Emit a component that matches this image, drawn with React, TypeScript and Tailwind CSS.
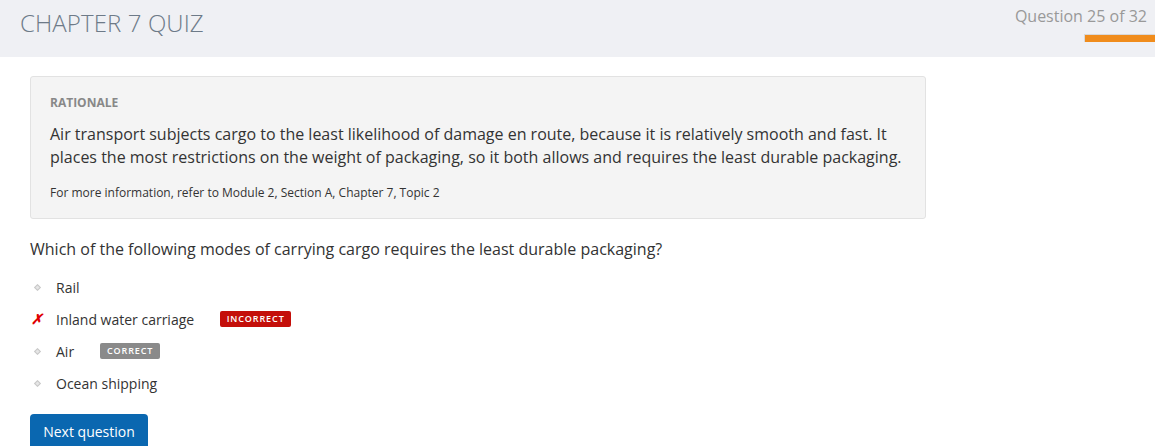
import React from "react";

const font = { fontFamily: '"Open Sans", "Noto Sans", sans-serif' };

function Bullet() {
  return (
    <span className="w-[26px] flex items-center pl-[5px]">
      <span className="block w-[5px] h-[5px] rotate-45 border border-[#c8c8c8] bg-[#e6e6e6]" />
    </span>
  );
}

function Cross() {
  return (
    <span className="w-[26px] flex items-center pl-[1px] text-[#e00000] text-[14px] font-bold italic leading-none">
      ✗
    </span>
  );
}

export default function App() {
  return (
    <div className="w-[1155px] h-[446px] overflow-hidden bg-white" style={font}>
      <div className="h-[57px] bg-[#eff0f4] flex justify-between">
        <div className="pl-[20px] pt-[7px] text-[24px] font-light text-[#6d7a88] leading-[32px] tracking-[0.1px]">
          CHAPTER 7 QUIZ
        </div>
        <div className="flex flex-col items-end pt-[5px]">
          <div className="pr-[8px] text-[16px] text-[#999] leading-[22px]">Question 25 of 32</div>
          <div className="mt-[7px] w-[71px] h-[8px] bg-[#f08c1c] border-l border-t border-[#d8d8d8]" />
        </div>
      </div>
      <div className="pl-[30px] pt-[19px]">
        <div className="w-[896px] h-[143px] bg-[#f4f4f4] border border-[#e2e2e2] rounded-[3px] px-[19px] pt-[18px]">
          <div className="text-[12px] font-bold text-[#888] leading-[16px]">RATIONALE</div>
          <div className="mt-[12px] text-[16px] text-[#333] leading-[23px]">
            Air transport subjects cargo to the least likelihood of damage en route, because it is relatively smooth and fast. It places the most restrictions on the weight of packaging, so it both allows and requires the least durable packaging.
          </div>
          <div className="mt-[16px] text-[12px] text-[#333] leading-[16px]">
            For more information, refer to Module 2, Section A, Chapter 7, Topic 2
          </div>
        </div>
        <div className="mt-[19px] text-[16px] text-[#333] leading-[22px]">
          Which of the following modes of carrying cargo requires the least durable packaging?
        </div>
        <div className="mt-[17px] flex flex-col gap-[12px] text-[14px] text-[#333]">
          <div className="flex items-center h-[20px]">
            <Bullet />
            <span>Rail</span>
          </div>
          <div className="flex items-center h-[20px]">
            <Cross />
            <span>Inland water carriage</span>
            <span className="ml-[26px] bg-[#c40f0a] text-white text-[9px] font-semibold tracking-[0.9px] rounded-[2px] h-[16px] w-[71px] flex items-center justify-center">
              INCORRECT
            </span>
          </div>
          <div className="flex items-center h-[20px]">
            <Bullet />
            <span>Air</span>
            <span className="ml-[26px] bg-[#8a8a8a] text-white text-[9px] font-semibold tracking-[0.9px] rounded-[2px] h-[16px] w-[60px] flex items-center justify-center">
              CORRECT
            </span>
          </div>
          <div className="flex items-center h-[20px]">
            <Bullet />
            <span>Ocean shipping</span>
          </div>
        </div>
        <button className="mt-[21px] w-[118px] h-[36px] bg-[#0a67b0] text-white text-[14px] rounded-[4px] flex items-center justify-center pb-[1px]">
          Next question
        </button>
      </div>
    </div>
  );
}
